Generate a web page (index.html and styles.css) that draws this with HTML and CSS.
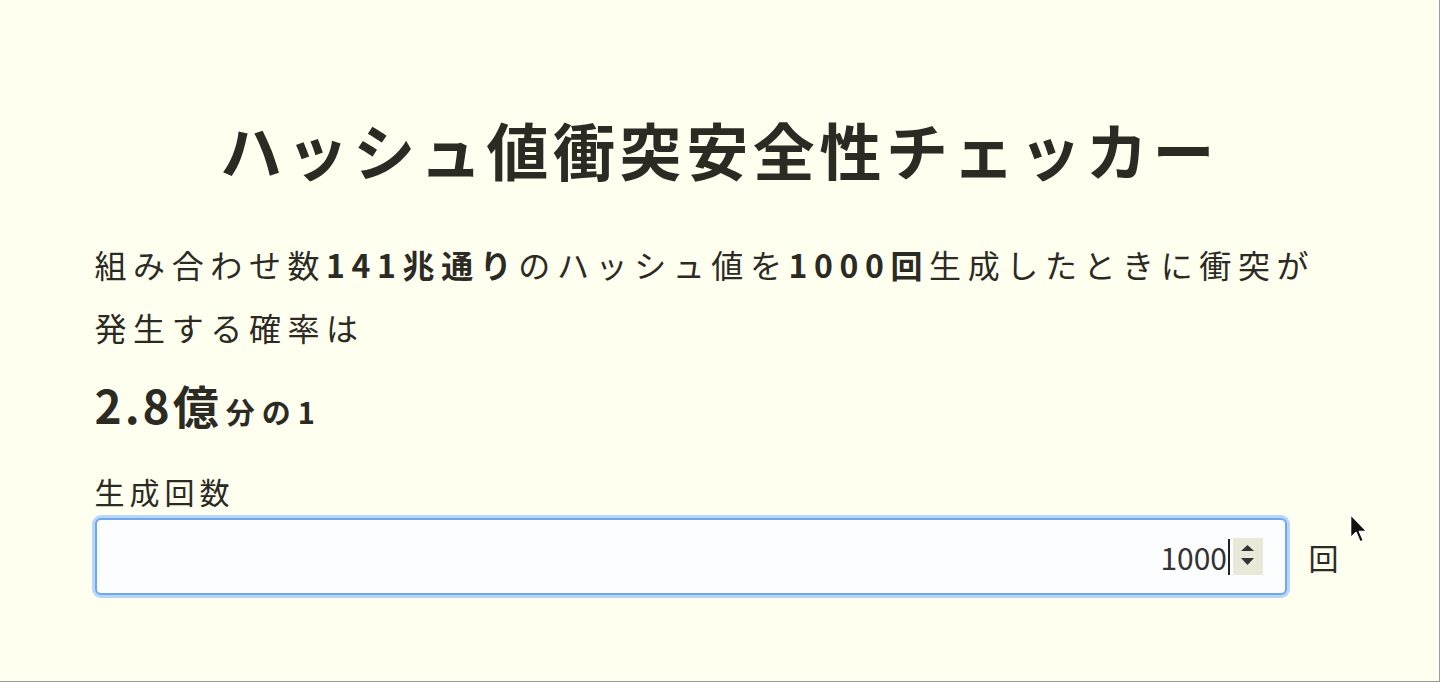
FILE: index.html
```html
<!DOCTYPE html>
<html lang="ja">
<head>
<meta charset="utf-8">
<title>ハッシュ値衝突安全性チェッカー</title>
<link rel="stylesheet" href="styles.css">
</head>
<body>
<div class="frame">
  <main class="container">
    <h1 class="title">ハッシュ値衝突安全性チェッカー</h1>
    <p class="desc">組み合わせ数<strong>141兆通り</strong>のハッシュ値を<strong>1000回</strong>生成したときに衝突が<br>発生する確率は</p>
    <p class="result"><span class="big">2.8億</span><span class="small">分の1</span></p>
    <label class="label" for="count">生成回数</label>
    <div class="row">
      <div class="field" id="count" role="spinbutton" aria-valuenow="1000">
        <span class="value">1000</span><span class="caret"></span><span class="spinner"><svg width="30" height="37" viewBox="0 0 30 37"><polygon points="8,13 14.5,7 21,13" fill="#333"/><polygon points="8,20 21,20 14.5,27" fill="#333"/></svg></span>
      </div>
      <span class="unit">回</span>
    </div>
  </main>
  <svg class="pointer" width="22" height="34" viewBox="0 0 22 34"><path d="M1.5 1.5 L1.5 25 L7 19.5 L11 29 L14.5 27.5 L10.5 18.5 L18 18.5 Z" fill="#111" stroke="#fff" stroke-width="1.6" stroke-linejoin="round"/></svg>
</div>
</body>
</html>
```
FILE: styles.css
```css
html, body {
  margin: 0;
  padding: 0;
}
body {
  background: #fffff0;
  color: #2b2b24;
  font-family: "Noto Sans CJK JP", "Noto Sans", sans-serif;
}
.frame {
  position: relative;
  box-sizing: border-box;
  min-height: 682px;
  border-right: 1px solid #9a9a9a;
  border-bottom: 1px solid #9a9a9a;
  overflow: hidden;
}
.container {
  width: 1250px;
  margin: 0 auto;
  padding-top: 113px;
}
.title {
  margin: 0;
  font-size: 62px;
  line-height: 72px;
  font-weight: 700;
  letter-spacing: 4.6px;
  text-align: center;
}
.desc {
  margin: 48px 0 0;
  font-size: 32px;
  line-height: 63px;
  letter-spacing: 6.6px;
}
.desc strong {
  font-weight: 700;
}
.result {
  margin: 15px 0 0;
  font-weight: 700;
  line-height: 60px;
  font-size: 46px;
}
.result .big {
  font-size: 46px;
  letter-spacing: 3px;
}
.result .small {
  font-size: 29px;
  margin-left: 4px;
  letter-spacing: 7px;
}
.label {
  display: block;
  margin-top: 30px;
  font-size: 30px;
  line-height: 40px;
  letter-spacing: 5px;
}
.row {
  margin-top: 7px;
  display: flex;
  align-items: center;
  gap: 22px;
}
.field {
  flex: 1;
  box-sizing: border-box;
  height: 77px;
  border: 2px solid #6fa7f0;
  border-radius: 6px;
  box-shadow: 0 0 0 3px #b8d5fa;
  background: #fcfdff;
  display: flex;
  align-items: center;
  justify-content: flex-end;
  padding-right: 22px;
  font-size: 30px;
  color: #333;
}
.value {
  line-height: 1;
}
.caret {
  width: 1.5px;
  height: 36px;
  background: #222;
  margin-left: 1px;
}
.spinner {
  display: flex;
  margin-left: 3px;
  background: #e9e9d9;
}
.spinner svg {
  display: block;
}
.unit {
  font-size: 30px;
  width: 36px;
}
.pointer {
  position: absolute;
  left: 1349px;
  top: 513px;
}
```
